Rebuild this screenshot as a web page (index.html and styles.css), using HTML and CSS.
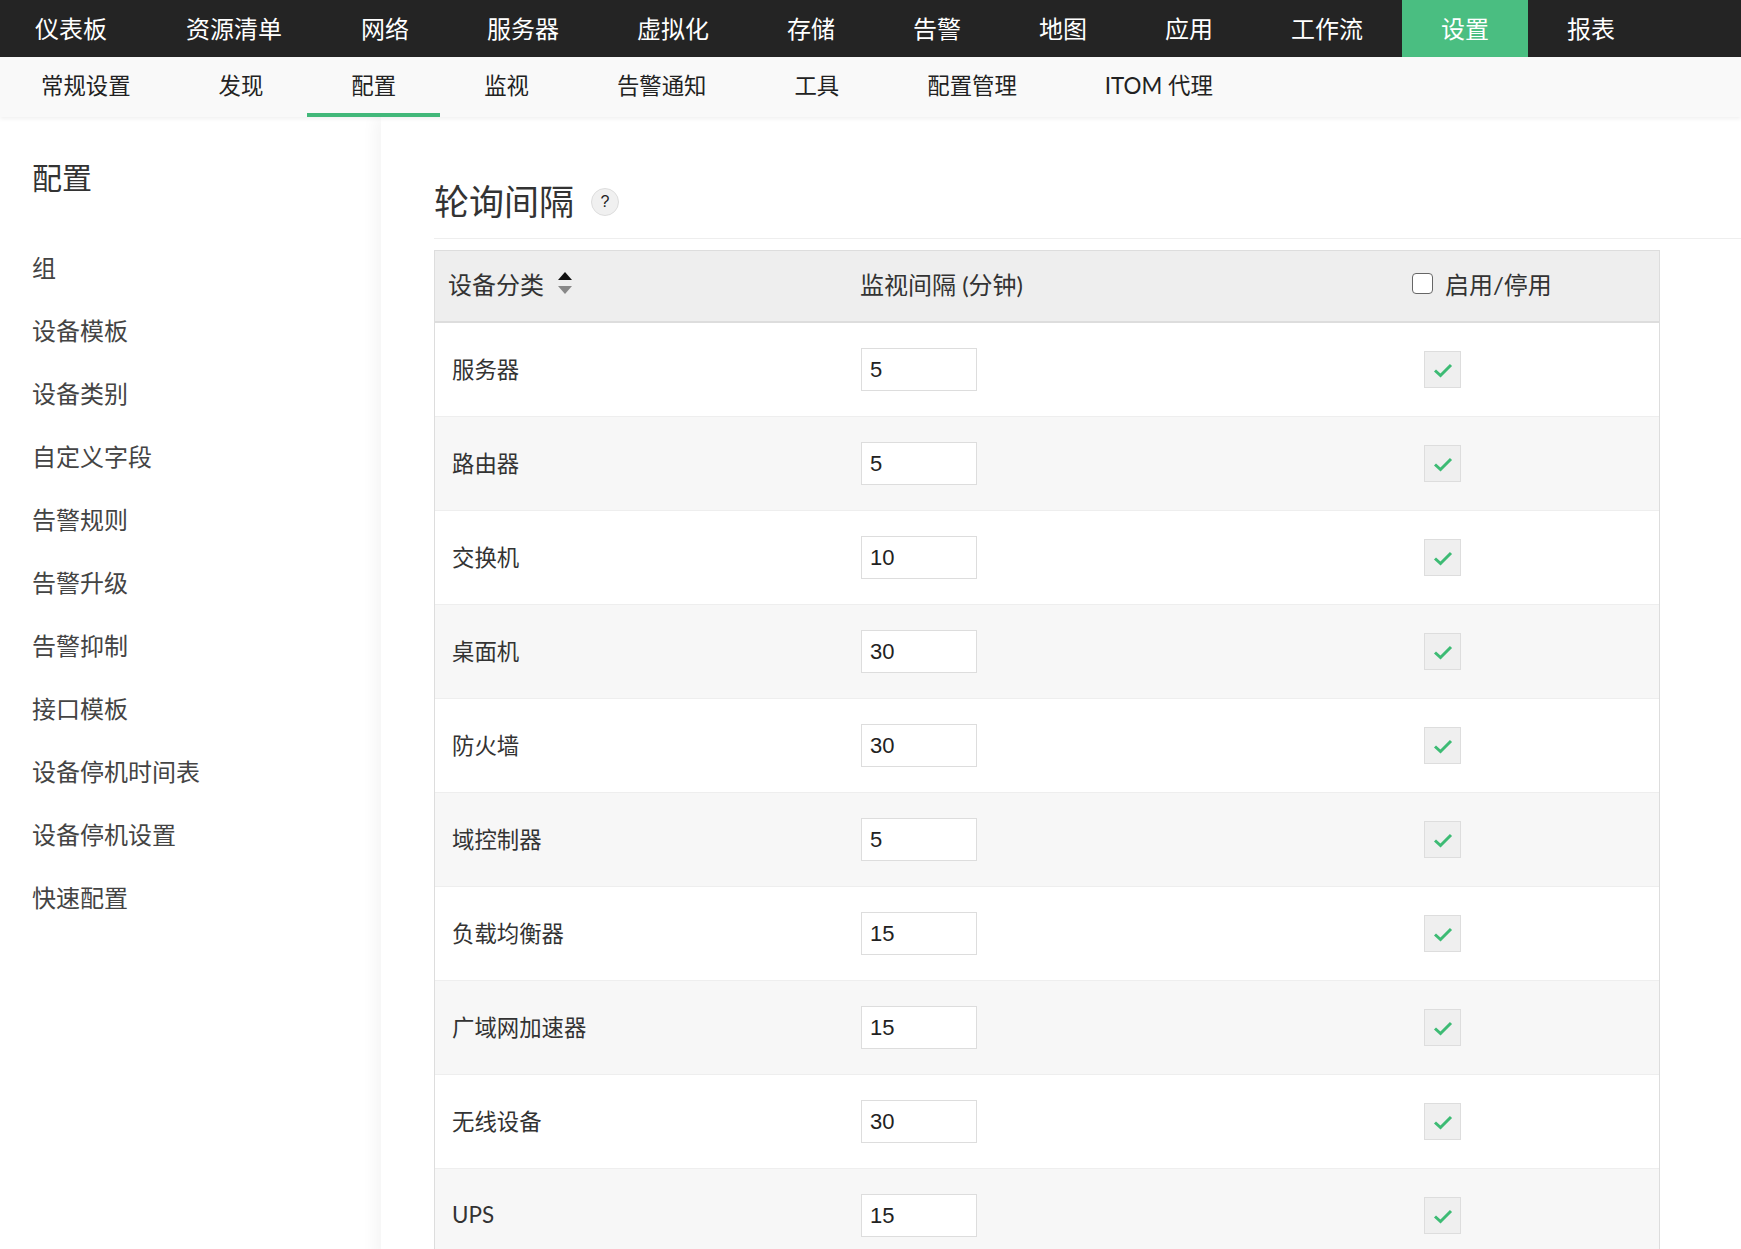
FILE: index.html
```html
<!DOCTYPE html>
<html lang="zh-CN">
<head>
    <meta charset="UTF-8">
    <title>设置 - 轮询间隔</title>
    <link rel="stylesheet" href="styles.css">
</head>
<body>
    <div class="topnav">
        <a class="topnav-item">仪表板</a>
        <a class="topnav-item">资源清单</a>
        <a class="topnav-item">网络</a>
        <a class="topnav-item">服务器</a>
        <a class="topnav-item">虚拟化</a>
        <a class="topnav-item">存储</a>
        <a class="topnav-item">告警</a>
        <a class="topnav-item">地图</a>
        <a class="topnav-item">应用</a>
        <a class="topnav-item">工作流</a>
        <a class="topnav-item active">设置</a>
        <a class="topnav-item">报表</a>
    </div>

    <div class="subnav">
        <a class="subnav-item">常规设置</a>
        <a class="subnav-item">发现</a>
        <a class="subnav-item active">配置</a>
        <a class="subnav-item">监视</a>
        <a class="subnav-item">告警通知</a>
        <a class="subnav-item">工具</a>
        <a class="subnav-item">配置管理</a>
        <a class="subnav-item">ITOM 代理</a>
    </div>

    <div class="layout">
        <div class="sidebar">
            <h2 class="sidebar-title">配置</h2>
            <ul class="sidebar-menu">
                <li>组</li>
                <li>设备模板</li>
                <li>设备类别</li>
                <li>自定义字段</li>
                <li>告警规则</li>
                <li>告警升级</li>
                <li>告警抑制</li>
                <li>接口模板</li>
                <li>设备停机时间表</li>
                <li>设备停机设置</li>
                <li>快速配置</li>
            </ul>
        </div>

        <div class="main">
            <div class="page-head">
                <h1 class="page-title">轮询间隔</h1>
                <span class="help">?</span>
            </div>

            <div class="grid">
                <div class="grid-head">
                    <div class="cell">设备分类
                        <span class="sort"><span class="sort-up"></span><span class="sort-down"></span></span>
                    </div>
                    <div class="cell">监视间隔 (分钟)</div>
                    <div class="cell"><span class="head-check"></span>启用/停用</div>
                </div>
                <div id="rows"></div>
            </div>
        </div>
    </div>

    <script>
        const categorias = [
            ["服务器", 5],
            ["路由器", 5],
            ["交换机", 10],
            ["桌面机", 30],
            ["防火墙", 30],
            ["域控制器", 5],
            ["负载均衡器", 15],
            ["广域网加速器", 15],
            ["无线设备", 30],
            ["UPS", 15]
        ];

        const check = '<span class="check"><svg width="20" height="16" viewBox="0 0 20 16">' +
            '<path d="M2 8.5 L7.5 13.5 L18 3" fill="none" stroke="#3dbb74" stroke-width="3"/></svg></span>';

        let html = "";
        categorias.forEach(function (c) {
            html += '<div class="grid-row">' +
                '<div class="cell name">' + c[0] + '</div>' +
                '<div class="cell"><input class="interval" type="text" value="' + c[1] + '"></div>' +
                '<div class="cell">' + check + '</div>' +
                '</div>';
        });
        document.getElementById("rows").innerHTML = html;
    </script>
</body>
</html>
```

FILE: styles.css
```css
body {
    margin: 0;
    font-family: Lato, "Noto Sans CJK SC", sans-serif;
    color: #333;
    background: #fff;
    overflow: hidden;
}
.topnav {
    display: flex;
    height: 57px;
    background: #242424;
}
.topnav-item {
    padding: 0 39px;
    font-size: 24px;
    line-height: 57px;
    color: #fff;
}
.topnav-item:first-child {
    padding-left: 35px;
    padding-right: 40px;
}
.topnav-item:nth-child(2) {
    padding-right: 40px;
}
.topnav-item.active {
    background: #4abe81;
}
.subnav {
    display: flex;
    height: 60px;
    background: #f9f9f9;
    box-shadow: 0 2px 4px rgba(0, 0, 0, 0.06);
    position: relative;
    z-index: 2;
}
.subnav-item {
    padding: 2px 44px 0;
    font-size: 22.4px;
    line-height: 54px;
    color: #222;
    border-bottom: 4px solid transparent;
}
.subnav-item:first-child {
    padding-left: 41px;
}
.subnav-item.active {
    border-bottom-color: #42b87a;
}
.layout {
    display: flex;
    min-height: 1132px;
}
.sidebar {
    width: 381px;
    flex: none;
    padding: 37px 0 0 32px;
    box-sizing: border-box;
}
.sidebar-title {
    margin: 0 0 36px;
    font-size: 30px;
    font-weight: normal;
    line-height: 46px;
    color: #333;
}
.sidebar-menu {
    list-style: none;
    margin: 0;
    padding: 0;
}
.sidebar-menu li {
    font-size: 24px;
    line-height: 63px;
    color: #444;
}
.main {
    flex: 1;
    padding-left: 53px;
    box-shadow: -6px 0 14px rgba(0, 0, 0, 0.045);
}
.page-head {
    display: flex;
    align-items: center;
    height: 122px;
    padding-top: 44px;
    border-bottom: 1px solid #eee;
    box-sizing: border-box;
}
.page-title {
    margin: 0;
    font-size: 35px;
    font-weight: normal;
    color: #333;
}
.help {
    width: 26px;
    height: 26px;
    margin-left: 17px;
    margin-top: 4px;
    border: 1px solid #ddd;
    border-radius: 50%;
    background: #f0f0f0;
    font-family: "Liberation Sans", sans-serif;
    font-size: 16px;
    line-height: 26px;
    text-align: center;
    color: #222;
}
.grid {
    width: 1224px;
    margin-top: 11px;
    border: 1px solid #ddd;
    border-bottom: none;
}
.grid-head,
.grid-row {
    display: grid;
    grid-template-columns: 412px 552px 1fr;
    align-items: center;
}
.grid-head {
    height: 70px;
    background: #eee;
    border-bottom: 2px solid #ddd;
    font-size: 24px;
    color: #333;
}
.grid-head .cell {
    display: flex;
    align-items: center;
    padding-left: 13px;
    padding-bottom: 6px;
}
.grid-row {
    height: 93px;
    border-bottom: 1px solid #eee;
}
.grid-row:nth-child(even) {
    background: #f7f7f7;
}
.grid-row .cell {
    padding-left: 14px;
}
.grid-row .name {
    padding-left: 17px;
    padding-bottom: 3px;
    font-size: 22.4px;
    color: #333;
}
.sort {
    display: inline-flex;
    flex-direction: column;
    gap: 6px;
    margin-left: 14px;
}
.sort-up {
    border-left: 7px solid transparent;
    border-right: 7px solid transparent;
    border-bottom: 8px solid #111;
}
.sort-down {
    border-left: 7px solid transparent;
    border-right: 7px solid transparent;
    border-top: 8px solid #888;
}
.head-check {
    width: 19px;
    height: 19px;
    margin-right: 12px;
    border: 1.5px solid #666;
    border-radius: 4px;
    background: #fff;
}
.interval {
    width: 116px;
    height: 43px;
    box-sizing: border-box;
    padding: 0 8px;
    border: 1px solid #ddd;
    font-family: "Liberation Sans", sans-serif;
    font-size: 22px;
    color: #222;
    background: #fff;
    outline: none;
}
.check {
    display: flex;
    align-items: center;
    justify-content: center;
    width: 37px;
    height: 37px;
    margin-left: 11px;
    box-sizing: border-box;
    border: 1px solid #ddd;
    background: #efefef;
}
```
